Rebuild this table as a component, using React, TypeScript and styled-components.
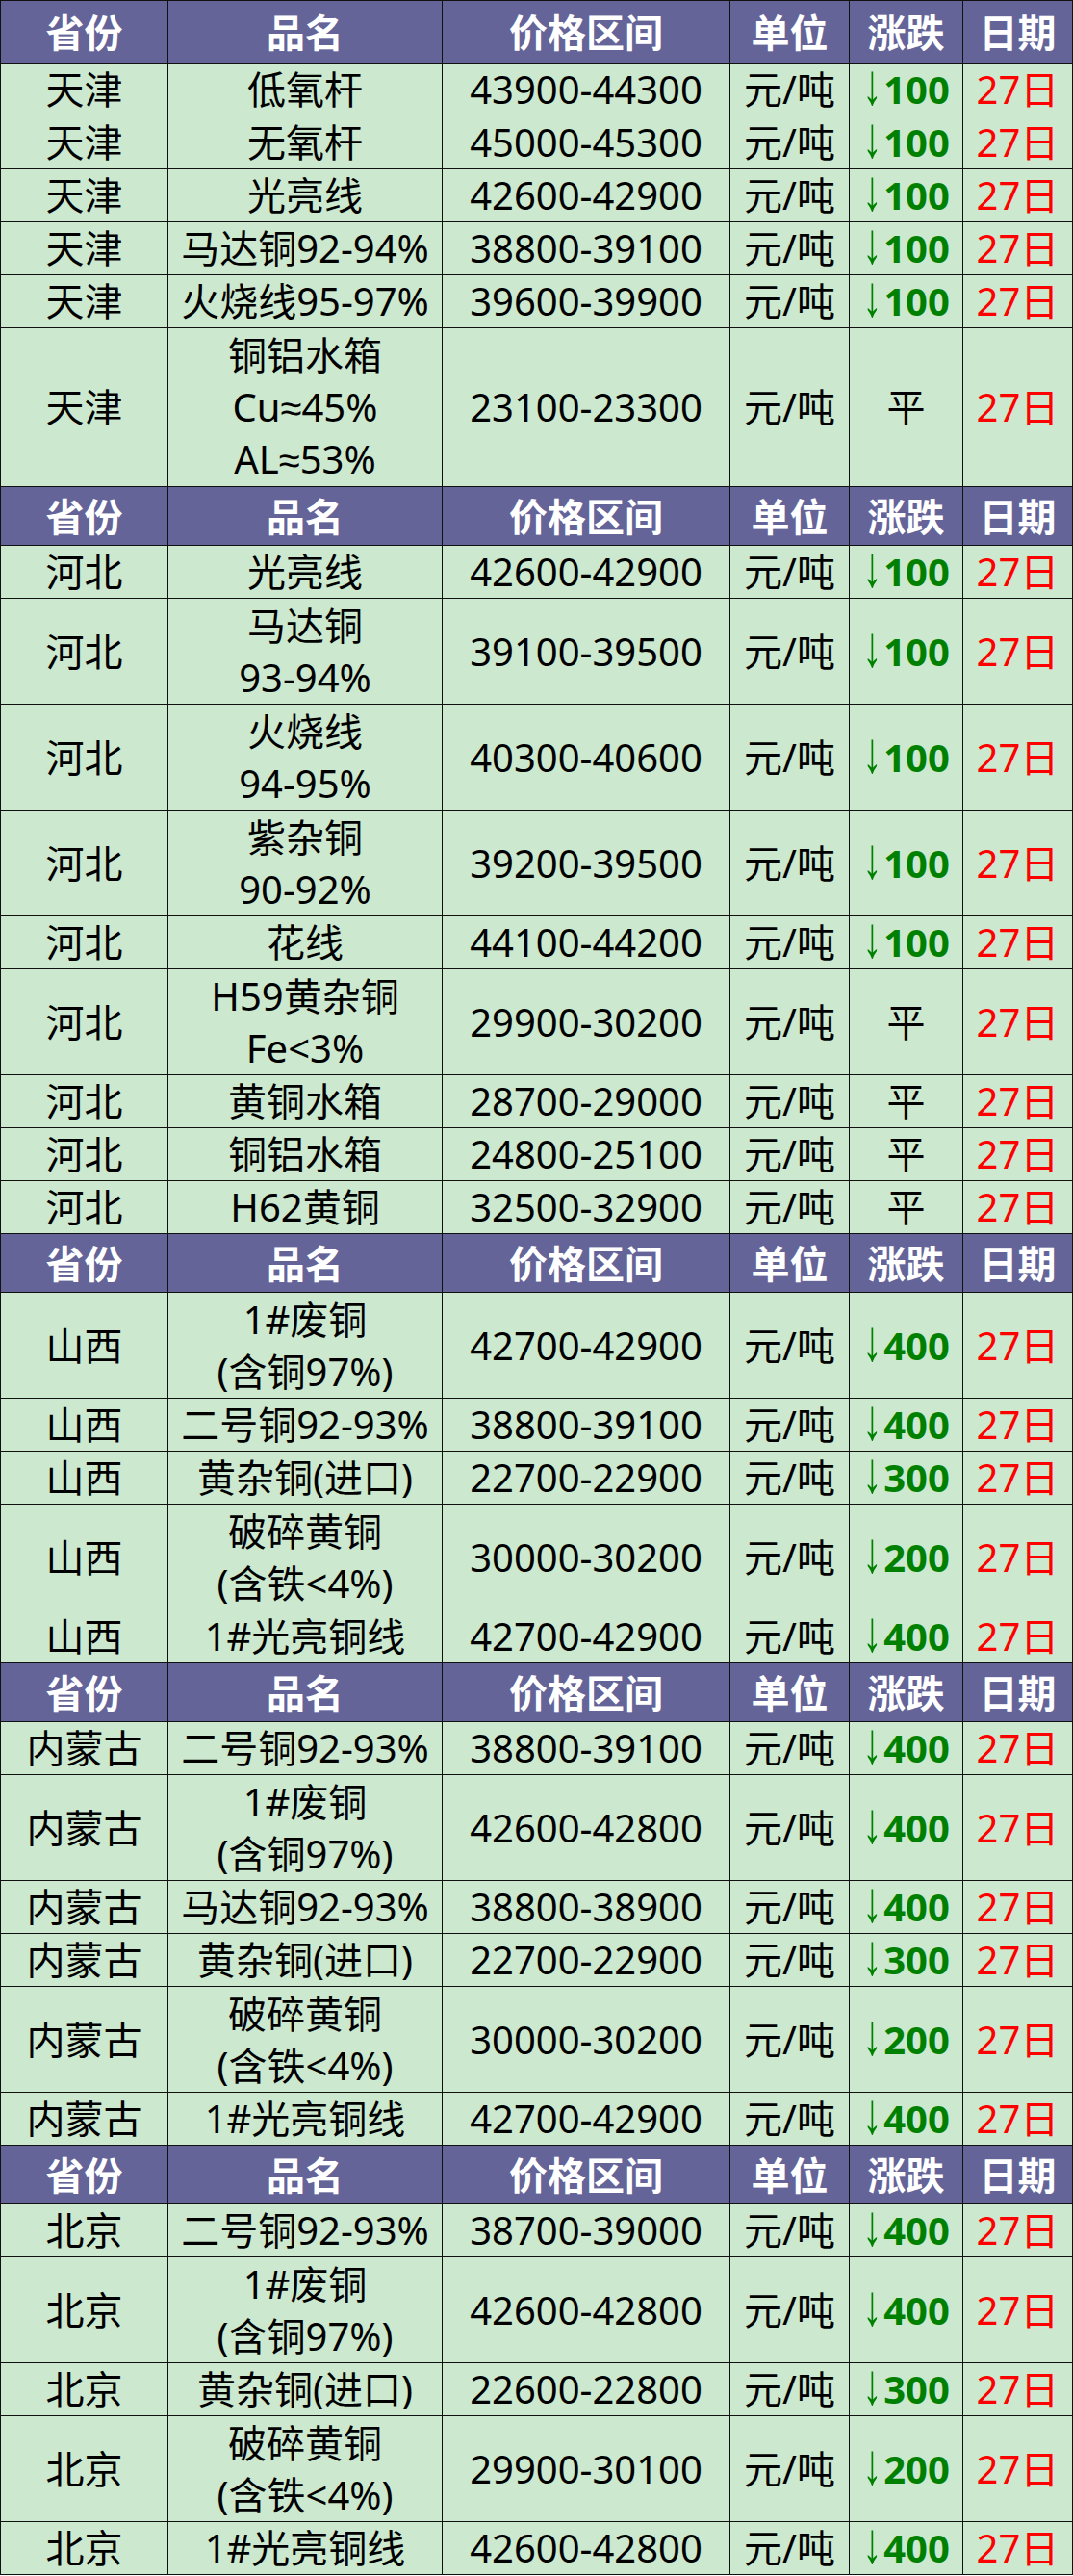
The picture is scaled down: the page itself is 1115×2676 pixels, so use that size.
import React from "react";
import styled, { createGlobalStyle } from "styled-components";

const GlobalStyle = createGlobalStyle`
  html, body { margin: 0; padding: 0; background: #ffffff; }
  body { font-family: "Noto Sans", "Liberation Sans", "Noto Sans CJK SC", sans-serif; }
`;

const UNIT = 55;

type Change = { dir: "down" | "flat"; value?: number };
type Row = { province: string; name: string[]; price: string; change: Change };
type Section = { rows: Row[] };

const down = (value: number): Change => ({ dir: "down", value });
const flat: Change = { dir: "flat" };

const sections: Section[] = [
  {
    rows: [
      { province: "天津", name: ["低氧杆"], price: "43900-44300", change: down(100) },
      { province: "天津", name: ["无氧杆"], price: "45000-45300", change: down(100) },
      { province: "天津", name: ["光亮线"], price: "42600-42900", change: down(100) },
      { province: "天津", name: ["马达铜92-94%"], price: "38800-39100", change: down(100) },
      { province: "天津", name: ["火烧线95-97%"], price: "39600-39900", change: down(100) },
      { province: "天津", name: ["铜铝水箱", "Cu≈45%", "AL≈53%"], price: "23100-23300", change: flat },
    ],
  },
  {
    rows: [
      { province: "河北", name: ["光亮线"], price: "42600-42900", change: down(100) },
      { province: "河北", name: ["马达铜", "93-94%"], price: "39100-39500", change: down(100) },
      { province: "河北", name: ["火烧线", "94-95%"], price: "40300-40600", change: down(100) },
      { province: "河北", name: ["紫杂铜", "90-92%"], price: "39200-39500", change: down(100) },
      { province: "河北", name: ["花线"], price: "44100-44200", change: down(100) },
      { province: "河北", name: ["H59黄杂铜", "Fe<3%"], price: "29900-30200", change: flat },
      { province: "河北", name: ["黄铜水箱"], price: "28700-29000", change: flat },
      { province: "河北", name: ["铜铝水箱"], price: "24800-25100", change: flat },
      { province: "河北", name: ["H62黄铜"], price: "32500-32900", change: flat },
    ],
  },
  {
    rows: [
      { province: "山西", name: ["1#废铜", "(含铜97%)"], price: "42700-42900", change: down(400) },
      { province: "山西", name: ["二号铜92-93%"], price: "38800-39100", change: down(400) },
      { province: "山西", name: ["黄杂铜(进口)"], price: "22700-22900", change: down(300) },
      { province: "山西", name: ["破碎黄铜", "(含铁<4%)"], price: "30000-30200", change: down(200) },
      { province: "山西", name: ["1#光亮铜线"], price: "42700-42900", change: down(400) },
    ],
  },
  {
    rows: [
      { province: "内蒙古", name: ["二号铜92-93%"], price: "38800-39100", change: down(400) },
      { province: "内蒙古", name: ["1#废铜", "(含铜97%)"], price: "42600-42800", change: down(400) },
      { province: "内蒙古", name: ["马达铜92-93%"], price: "38800-38900", change: down(400) },
      { province: "内蒙古", name: ["黄杂铜(进口)"], price: "22700-22900", change: down(300) },
      { province: "内蒙古", name: ["破碎黄铜", "(含铁<4%)"], price: "30000-30200", change: down(200) },
      { province: "内蒙古", name: ["1#光亮铜线"], price: "42700-42900", change: down(400) },
    ],
  },
  {
    rows: [
      { province: "北京", name: ["二号铜92-93%"], price: "38700-39000", change: down(400) },
      { province: "北京", name: ["1#废铜", "(含铜97%)"], price: "42600-42800", change: down(400) },
      { province: "北京", name: ["黄杂铜(进口)"], price: "22600-22800", change: down(300) },
      { province: "北京", name: ["破碎黄铜", "(含铁<4%)"], price: "29900-30100", change: down(200) },
      { province: "北京", name: ["1#光亮铜线"], price: "42600-42800", change: down(400) },
    ],
  },
];

const headers = ["省份", "品名", "价格区间", "单位", "涨跌", "日期"];

const Table = styled.div`
  display: grid;
  grid-template-columns: 174px 285px 299px 124px 118px 114px;
  width: 1115px;
  box-sizing: border-box;
  border-left: 1px solid #111;
  border-top: 1px solid #111;
  background: #cce8cf;
`;

const BaseCell = styled.div`
  box-sizing: border-box;
  border-right: 1px solid #111;
  border-bottom: 1px solid #111;
  display: flex;
  flex-direction: column;
  align-items: center;
  justify-content: center;
  text-align: center;
  white-space: nowrap;
  overflow: hidden;
`;

const HeadCell = styled(BaseCell)<{ $first: boolean }>`
  height: ${(p) => (p.$first ? 65 : 61)}px;
  background: #646499;
  color: #ffffff;
  font-family: "Noto Sans CJK SC", sans-serif;
  font-weight: 700;
  font-size: 40px;
  line-height: 1;
  padding-bottom: 2px;
`;

const Cell = styled(BaseCell)<{ $units: number; $tone?: "plain" | "date" }>`
  height: ${(p) => p.$units * UNIT}px;
  font-size: 40px;
  line-height: 54px;
  color: ${(p) => (p.$tone === "date" ? "#ff0000" : "#000000")};
`;

const NameLine = styled.span`
  display: block;
`;

const ChangeText = styled.span<{ $dir: "down" | "flat" }>`
  color: ${(p) => (p.$dir === "down" ? "#008000" : "#000000")};
  font-weight: ${(p) => (p.$dir === "down" ? 700 : 400)};
`;

const Arrow = styled.span`
  display: inline-block;
  font-family: "Liberation Sans", sans-serif;
  font-weight: 400;
  line-height: 1;
  transform: scaleY(1.5);
  transform-origin: 50% 34px;
  margin-right: 2px;
`;

function ChangeCell({ change, units }: { change: Change; units: number }) {
  return (
    <Cell $units={units}>
      {change.dir === "down" ? (
        <ChangeText $dir="down">
          <Arrow>↓</Arrow>
          {change.value}
        </ChangeText>
      ) : (
        <ChangeText $dir="flat">平</ChangeText>
      )}
    </Cell>
  );
}

export default function App() {
  return (
    <>
      <GlobalStyle />
      <Table>
        {sections.map((section, si) => (
          <React.Fragment key={si}>
            {headers.map((h) => (
              <HeadCell key={`h-${si}-${h}`} $first={si === 0}>
                {h}
              </HeadCell>
            ))}
            {section.rows.map((row, ri) => {
              const units = row.name.length;
              return (
                <React.Fragment key={`r-${si}-${ri}`}>
                  <Cell $units={units}>{row.province}</Cell>
                  <Cell $units={units}>
                    {row.name.map((line, li) => (
                      <NameLine key={li}>{line}</NameLine>
                    ))}
                  </Cell>
                  <Cell $units={units}>{row.price}</Cell>
                  <Cell $units={units}>元/吨</Cell>
                  <ChangeCell change={row.change} units={units} />
                  <Cell $units={units} $tone="date">
                    27日
                  </Cell>
                </React.Fragment>
              );
            })}
          </React.Fragment>
        ))}
      </Table>
    </>
  );
}
